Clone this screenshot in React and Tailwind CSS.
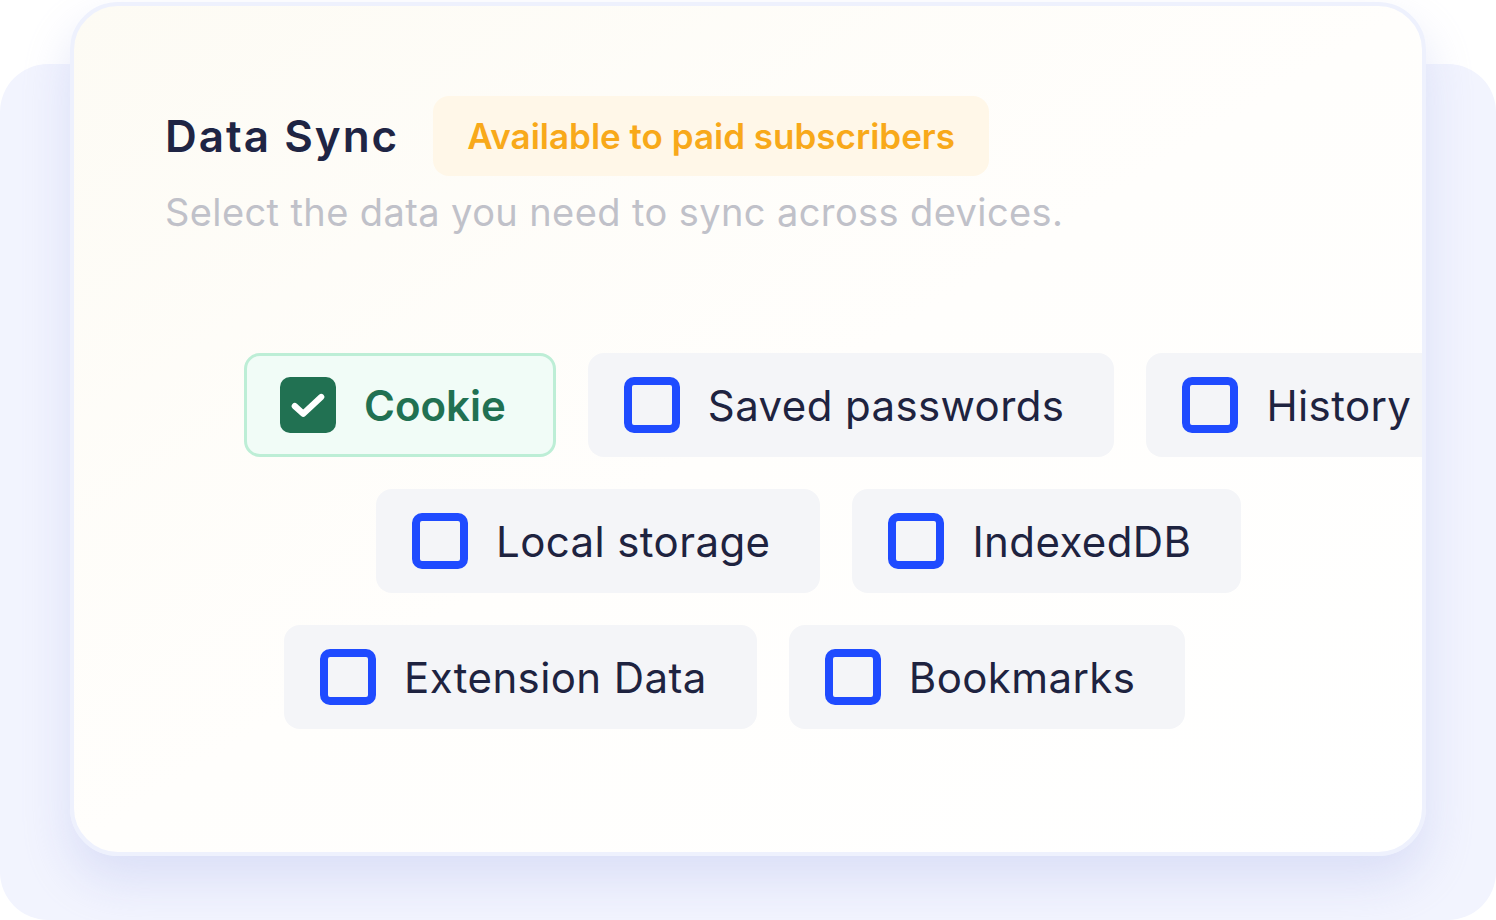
import React from 'react';

const rows = [
  { offset: 'ml-[170px]', items: [{ label: 'Cookie', checked: true }, { label: 'Saved passwords' }, { label: 'History' }] },
  { offset: 'ml-[302px]', items: [{ label: 'Local storage' }, { label: 'IndexedDB' }] },
  { offset: 'ml-[210px]', items: [{ label: 'Extension Data' }, { label: 'Bookmarks' }] },
];

const CheckBox = ({ checked }) =>
  checked ? (
    <span className="flex h-[56px] w-[56px] shrink-0 items-center justify-center rounded-[10px] bg-[#217152]">
      <svg width="44" height="44" viewBox="0 0 24 24" fill="none" stroke="white" strokeWidth="3.4" strokeLinecap="round" strokeLinejoin="round">
        <path d="M4.8 12.6l4.6 4.2L19.2 7.6" />
      </svg>
    </span>
  ) : (
    <span className="h-[56px] w-[56px] shrink-0 rounded-[10px] border-[8px] border-[#1f4bff]" />
  );

const Chip = ({ label, checked }) => (
  <div
    className={
      checked
        ? 'flex h-[104px] shrink-0 items-center gap-[28px] rounded-[16px] border-[3px] border-[#bdeed6] bg-[#f1fcf7] pl-[33px] pr-[47px]'
        : 'flex h-[104px] shrink-0 items-center gap-[28px] rounded-[16px] bg-[#f4f5f8] pl-[36px] pr-[50px]'
    }
  >
    <CheckBox checked={checked} />
    <span
      className={
        checked
          ? 'whitespace-nowrap text-[42px] font-semibold text-[#217152]'
          : 'whitespace-nowrap text-[42px] font-normal tracking-[0.4px] text-[#1e2340]'
      }
    >
      {label}
    </span>
  </div>
);

export default function App() {
  return (
    <div className="h-[920px] w-[1496px] overflow-hidden bg-white pt-[64px] font-['Inter',sans-serif]">
      <div className="h-[856px] w-[1496px] rounded-[48px] bg-[#f2f4fe] pt-px">
        <div className="-mt-[63px] ml-[70px] h-[854px] w-[1356px] overflow-hidden rounded-[48px] border-[4px] border-[#eef1fd] bg-gradient-to-br from-[#fdfbf4] via-[#fffefc] to-white shadow-[0_24px_48px_rgba(190,198,240,0.45)]">
          <div className="pl-[91px] pt-[90px]">
            <div className="flex items-center gap-[34px]">
              <h1 className="text-[44px] font-semibold tracking-[2px] text-[#1f2544]">Data Sync</h1>
              <span className="flex h-[80px] items-center rounded-[16px] bg-[#fff7e8] px-[34px] text-[35px] font-semibold text-[#f8a91a]">
                Available to paid subscribers
              </span>
            </div>
            <p className="mt-[8px] text-[38px] tracking-[0.4px] text-[#c0c1c9]">Select the data you need to sync across devices.</p>
          </div>
          <div className="mt-[112px] flex flex-col gap-[32px]">
            {rows.map((row, i) => (
              <div key={i} className={`flex gap-[32px] ${row.offset}`}>
                {row.items.map((item) => (
                  <Chip key={item.label} label={item.label} checked={item.checked} />
                ))}
              </div>
            ))}
          </div>
        </div>
      </div>
    </div>
  );
}
